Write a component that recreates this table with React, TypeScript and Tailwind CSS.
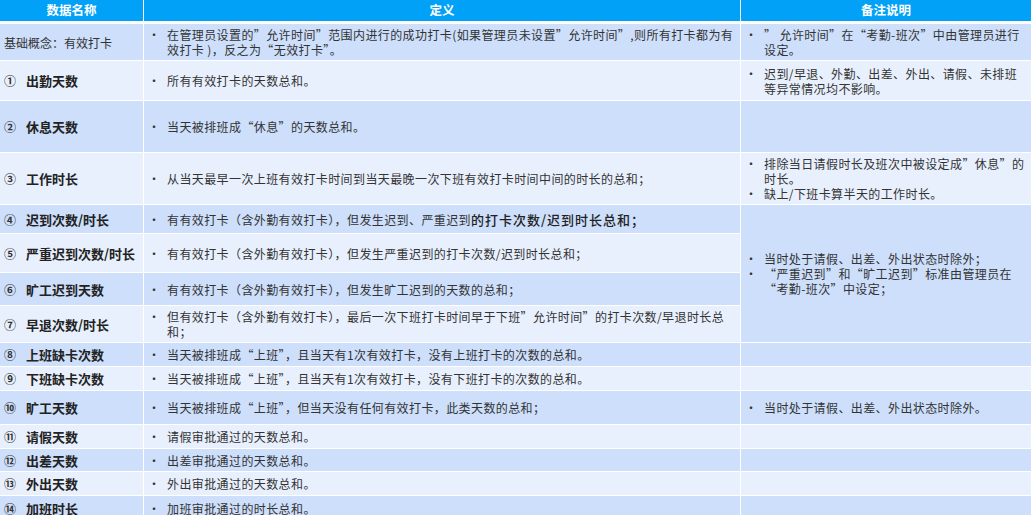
import type { ReactNode } from "react";

const dark = "bg-[#cddffb]";
const light = "bg-[#e8f0fd]";

type Row = {
  no?: string;
  name: string;
  def: ReactNode[];
  // undefined = empty cell, "skip" = covered by merged cell above
  note?: ReactNode[] | "merge" | "skip";
};

const rows: Row[] = [
  {
    name: "基础概念：有效打卡",
    def: [
      <>
        在管理员设置的”允许时间”范围内进行的成功打卡(如果管理员未设置”允许时间”,则所有打卡都为有
        <br />
        效打卡 )，反之为“无效打卡”。
      </>,
    ],
    note: [
      <>
        ” 允许时间”在“考勤-班次”中由管理员进行
        <br />
        设定。
      </>,
    ],
  },
  {
    no: "①",
    name: "出勤天数",
    def: ["所有有效打卡的天数总和。"],
    note: [
      <>
        迟到/早退、外勤、出差、外出、请假、未排班
        <br />
        等异常情况均不影响。
      </>,
    ],
  },
  { no: "②", name: "休息天数", def: ["当天被排班成“休息”的天数总和。"] },
  {
    no: "③",
    name: "工作时长",
    def: ["从当天最早一次上班有效打卡时间到当天最晚一次下班有效打卡时间中间的时长的总和；"],
    note: [
      <>
        排除当日请假时长及班次中被设定成”休息”的
        <br />
        时长。
      </>,
      "缺上/下班卡算半天的工作时长。",
    ],
  },
  {
    no: "④",
    name: "迟到次数/时长",
    def: [
      <>
        有有效打卡（含外勤有效打卡），但发生迟到、严重迟到
        <span className="text-[13px] font-medium tracking-[1px] text-[#222]">的打卡次数/迟到时长总和；</span>
      </>,
    ],
    note: "merge",
  },
  {
    no: "⑤",
    name: "严重迟到次数/时长",
    def: ["有有效打卡（含外勤有效打卡），但发生严重迟到的打卡次数/迟到时长总和；"],
    note: "skip",
  },
  {
    no: "⑥",
    name: "旷工迟到天数",
    def: ["有有效打卡（含外勤有效打卡），但发生旷工迟到的天数的总和；"],
    note: "skip",
  },
  {
    no: "⑦",
    name: "早退次数/时长",
    def: [
      <>
        但有效打卡（含外勤有效打卡），最后一次下班打卡时间早于下班”允许时间”的打卡次数/早退时长总
        <br />
        和；
      </>,
    ],
    note: "skip",
  },
  { no: "⑧", name: "上班缺卡次数", def: ["当天被排班成“上班”，且当天有1次有效打卡，没有上班打卡的次数的总和。"] },
  { no: "⑨", name: "下班缺卡次数", def: ["当天被排班成“上班”，且当天有1次有效打卡，没有下班打卡的次数的总和。"] },
  {
    no: "⑩",
    name: "旷工天数",
    def: ["当天被排班成“上班”，但当天没有任何有效打卡，此类天数的总和；"],
    note: ["当时处于请假、出差、外出状态时除外。"],
  },
  { no: "⑪", name: "请假天数", def: ["请假审批通过的天数总和。"] },
  { no: "⑫", name: "出差天数", def: ["出差审批通过的天数总和。"] },
  { no: "⑬", name: "外出天数", def: ["外出审批通过的天数总和。"] },
  { no: "⑭", name: "加班时长", def: ["加班审批通过的时长总和。"] },
];

function Bullets({ items }: { items: ReactNode[] }) {
  return (
    <div className="flex flex-col">
      {items.map((it, i) => (
        <div key={i} className="flex">
          <span className="w-[23px] shrink-0 pl-[4px]">•</span>
          <span>{it}</span>
        </div>
      ))}
    </div>
  );
}

export default function App() {
  return (
    <div className="h-[515px] w-[1031px] overflow-hidden bg-white font-['Noto_Sans_CJK_SC','Microsoft_YaHei',sans-serif] text-[12px] leading-[15px] tracking-[0.4px] text-[#333]">
      <div className="grid grid-cols-[143px_596px_290px] grid-rows-[23px_36px_39px_51px_51px_28px_38px_32px_36px_23px_23px_33px_23px_22px_23px_24px] gap-px">
        {["数据名称", "定义", "备注说明"].map((h) => (
          <div
            key={h}
            className="flex h-[23px] items-start justify-center border-b-2 border-white bg-[#00a1f7] pt-[2px] text-[12.5px] font-bold tracking-normal text-white"
          >
            {h}
          </div>
        ))}
        {rows.map((r, i) => {
          const tone = i % 2 === 0 ? dark : light;
          return [
            <div key={`n${i}`} className={`flex items-center pl-[4px] tracking-normal ${tone}`}>
              {r.no ? (
                <>
                  <span className="w-[22px] shrink-0 text-[12px] font-bold">{r.no}</span>
                  <span className="text-[13px] font-bold text-[#222]">{r.name}</span>
                </>
              ) : (
                <span className="text-[12px]">{r.name}</span>
              )}
            </div>,
            <div key={`d${i}`} className={`flex items-center ${tone}`}>
              <Bullets items={r.def} />
            </div>,
            r.note === "skip" ? null : r.note === "merge" ? (
              <div key={`m${i}`} className={`row-span-4 flex items-center ${dark}`}>
                <Bullets
                  items={[
                    "当时处于请假、出差、外出状态时除外；",
                    <>
                      “严重迟到”和“旷工迟到”标准由管理员在
                      <br />
                      “考勤-班次”中设定；
                    </>,
                  ]}
                />
              </div>
            ) : (
              <div key={`c${i}`} className={`flex items-center ${tone}`}>
                {r.note && <Bullets items={r.note} />}
              </div>
            ),
          ];
        })}
      </div>
    </div>
  );
}
